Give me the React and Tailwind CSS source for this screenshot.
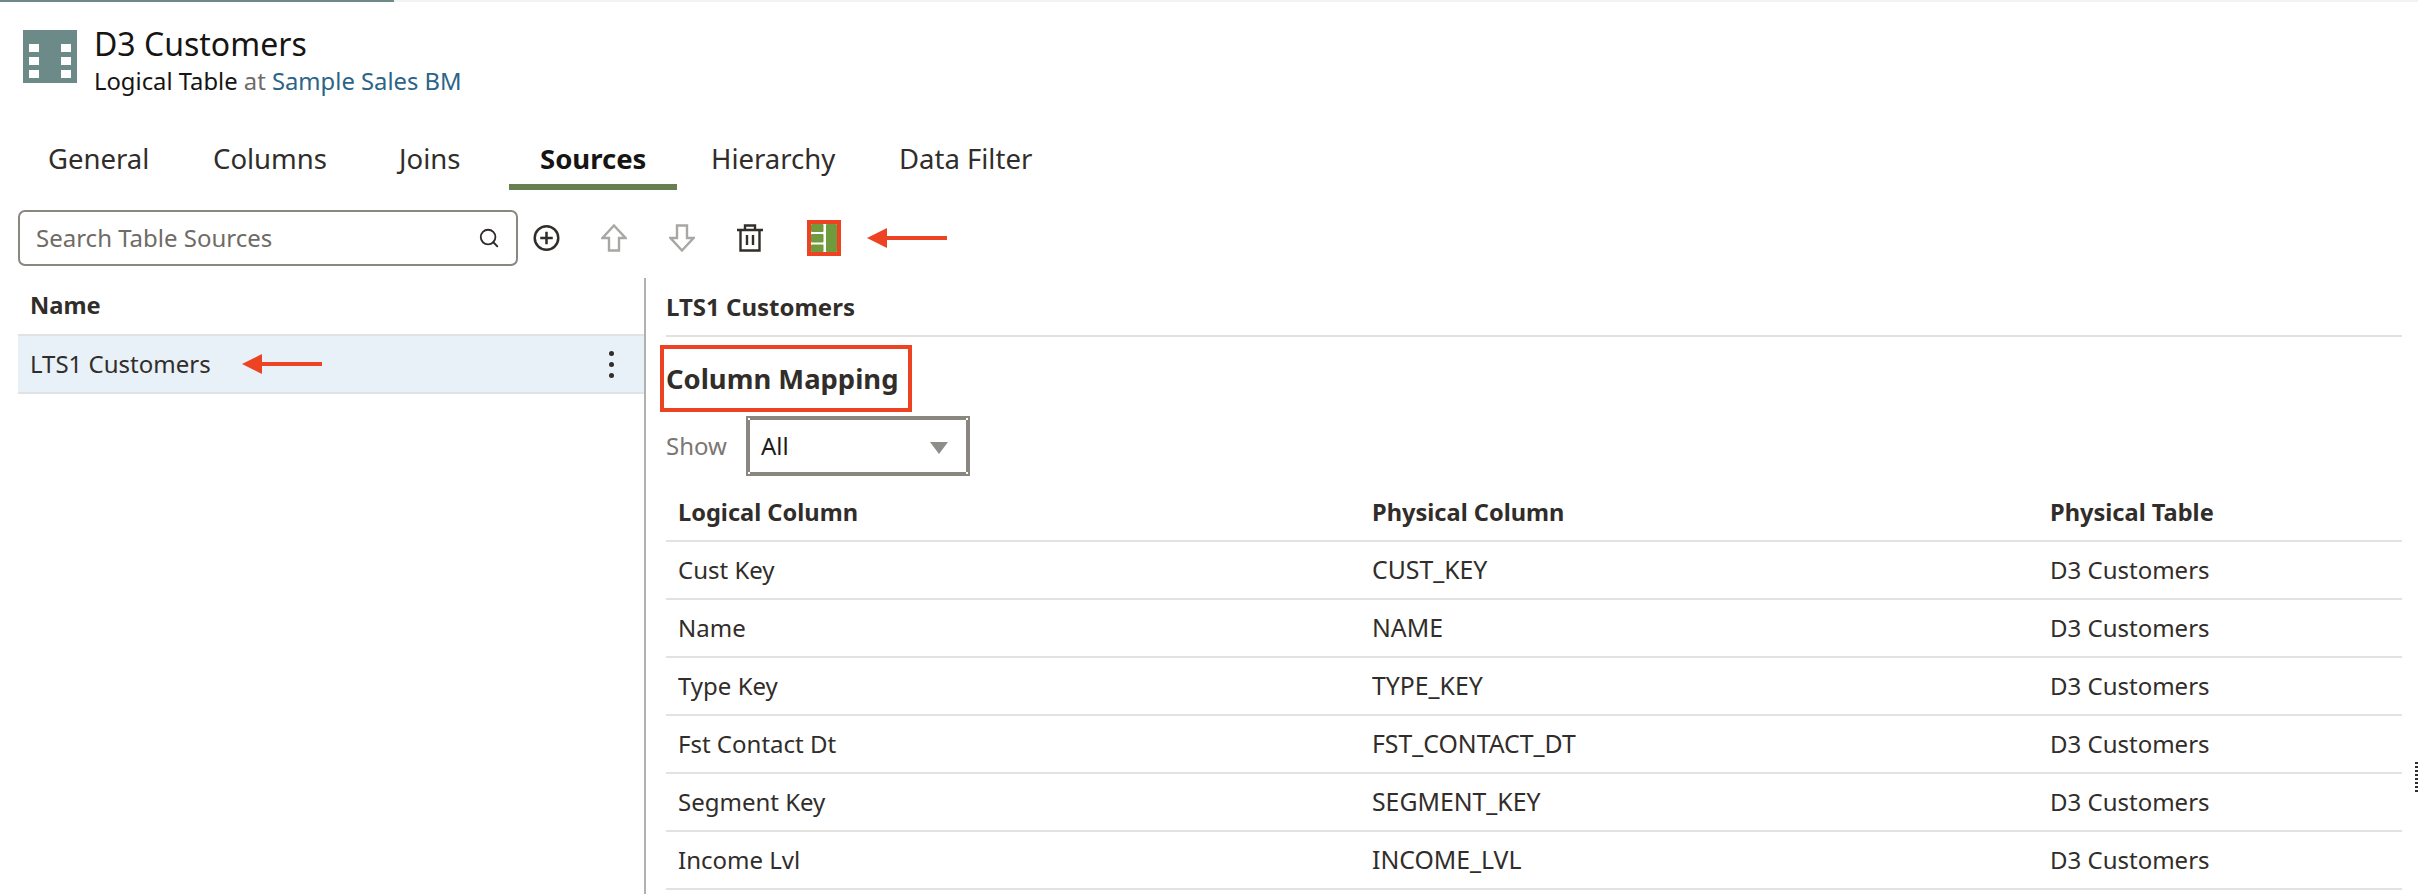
import { Search } from 'lucide-react';

const rows = [
    ['Cust Key', 'CUST_KEY'],
    ['Name', 'NAME'],
    ['Type Key', 'TYPE_KEY'],
    ['Fst Contact Dt', 'FST_CONTACT_DT'],
    ['Segment Key', 'SEGMENT_KEY'],
    ['Income Lvl', 'INCOME_LVL'],
];

const tabs = [
    { label: 'General', cls: 'w-[165px] pl-[31px]' },
    { label: 'Columns', cls: 'w-[186px] pl-[31px]' },
    { label: 'Joins', cls: 'w-[141px] pl-[31px]' },
    { label: 'Sources', cls: 'w-[168px] pl-[31px]', active: true },
    { label: 'Hierarchy', cls: 'w-[203px] pl-[34px]' },
    { label: 'Data Filter', cls: 'w-[160px] pl-[19px]' },
];

function RedArrow({ className }) {
    return (
        <svg className={className} width="80" height="20" viewBox="0 0 80 20">
            <path d="M0 10 L20 0 V8 H80 V12 H20 V20 Z" fill="#ee4323" />
        </svg>
    );
}

function TableIcon() {
    return (
        <svg width="54" height="53" viewBox="0 0 54 53">
            <rect width="54" height="53" fill="#6b8a88" />
            <g fill="#fff">
                <rect x="6" y="14" width="10" height="8" />
                <rect x="38" y="14" width="10" height="8" />
                <rect x="6" y="27" width="10" height="8" />
                <rect x="38" y="27" width="10" height="8" />
                <rect x="6" y="40" width="10" height="8" />
                <rect x="38" y="40" width="10" height="8" />
            </g>
        </svg>
    );
}

function Toolbar() {
    return (
        <div className="flex items-center h-[56px]">
            <div className="w-[500px] h-[56px] ml-[18px] border-2 border-[#8a8680] rounded-[7px] flex items-center justify-between pl-[16px] pr-[16px]">
                <span className="text-[24px] text-[#6f6b66]">Search Table Sources</span>
                <Search size={22} strokeWidth={2} className="text-[#2f2c2a]" />
            </div>
            <svg className="ml-[15px]" width="27" height="28" viewBox="0 0 28 28" fill="none" stroke="#312d2a" strokeWidth="2.6">
                <circle cx="14" cy="14" r="12.2" />
                <path d="M14 7.5V20.5M7.5 14H20.5" />
            </svg>
            <svg className="ml-[41px]" width="26" height="28" viewBox="0 0 26 28" fill="none" stroke="#a9a7a4" strokeWidth="2.4">
                <path d="M13 1.5 L24.5 14 H18 V26.5 H8 V14 H1.5 Z" />
            </svg>
            <svg className="ml-[42px]" width="26" height="28" viewBox="0 0 26 28" fill="none" stroke="#a9a7a4" strokeWidth="2.4">
                <path d="M13 26.5 L24.5 14 H18 V1.5 H8 V14 H1.5 Z" />
            </svg>
            <svg className="ml-[42px]" width="26" height="28" viewBox="0 0 26 28" fill="none" stroke="#312d2a" strokeWidth="2.4">
                <path d="M0 6H26M8 6V1.5H18V6M3.5 6V26.5H22.5V6M10 11V21M16 11V21" />
            </svg>
            <div className="ml-[44px] w-[34px] h-[36px] border-[4px] border-[#ee4323] flex">
                <svg width="26" height="28" viewBox="0 0 26 28">
                    <g fill="#6f9a3d">
                        <rect x="0" y="0" width="12.5" height="8" rx="1" />
                        <rect x="0" y="10" width="12.5" height="8.5" rx="1" />
                        <rect x="0" y="20.5" width="12.5" height="7.5" rx="1" />
                        <rect x="15" y="0" width="11" height="28" rx="1" />
                    </g>
                </svg>
            </div>
            <RedArrow className="ml-[26px]" />
        </div>
    );
}

function LeftPanel() {
    return (
        <div className="w-[646px] pl-[18px] border-r-2 border-[#b3b1ae] shrink-0">
            <div className="h-[56px] pl-[12px] flex items-center text-[23.7px] font-bold text-[#312d2a]">Name</div>
            <div className="h-[60px] bg-[#e8f1f8] border-y-2 border-[#e0e2e4] pl-[12px] pr-[30px] flex items-center justify-between">
                <div className="flex items-center">
                    <span className="text-[24px] text-[#312d2a]">LTS1 Customers</span>
                    <RedArrow className="ml-[31px]" />
                </div>
                <div className="flex flex-col gap-[6px]">
                    <span className="w-[5px] h-[5px] rounded-full bg-[#312d2a]" />
                    <span className="w-[5px] h-[5px] rounded-full bg-[#312d2a]" />
                    <span className="w-[5px] h-[5px] rounded-full bg-[#312d2a]" />
                </div>
            </div>
        </div>
    );
}

function RightPanel() {
    return (
        <div className="w-[1736px] ml-[20px] shrink-0">
            <div className="h-[59px] flex items-center text-[24px] font-bold text-[#312d2a] border-b-2 border-[#e4e2df]">LTS1 Customers</div>
            <div className="mt-[8px] ml-[-6px] w-[252px] h-[67px] border-[4px] border-[#ee4323] pl-[2px] flex items-center text-[27.4px] leading-none font-bold text-[#312d2a] whitespace-nowrap">
                Column Mapping
            </div>
            <div className="flex items-center mt-[4px]">
                <span className="w-[80px] text-[24px] text-[#7b7773]">Show</span>
                <div className="relative w-[224px] h-[60px] border-[4px] border-[#8a8680] flex items-center justify-between pl-[11px] pr-[18px]">
                    <span className="text-[24px] text-[#1f1c1a]">All</span>
                    <span className="w-0 h-0 mt-[4px] border-x-[9px] border-x-transparent border-t-[12px] border-t-[#8f8d8a]" />
                    <span className="absolute -left-[2px] -top-[2px] w-[2px] h-[2px] bg-white" />
                    <span className="absolute -right-[2px] -top-[2px] w-[2px] h-[2px] bg-white" />
                    <span className="absolute -left-[2px] -bottom-[2px] w-[2px] h-[2px] bg-white" />
                    <span className="absolute -right-[2px] -bottom-[2px] w-[2px] h-[2px] bg-white" />
                </div>
            </div>
            <div className="grid grid-cols-[694px_678px_1fr] h-[66px] pl-[12px] pt-[10px] items-center text-[23.6px] font-bold text-[#312d2a] border-b-2 border-[#e4e2df]">
                <span>Logical Column</span>
                <span>Physical Column</span>
                <span>Physical Table</span>
            </div>
            {rows.map((r) => (
                <div key={r[0]} className="grid grid-cols-[694px_678px_1fr] h-[58px] pl-[12px] items-center text-[24px] text-[#312d2a] border-b-2 border-[#e4e2df]">
                    <span>{r[0]}</span>
                    <span className="text-[24.8px]">{r[1]}</span>
                    <span>D3 Customers</span>
                </div>
            ))}
        </div>
    );
}

export default function App() {
    return (
        <div className="relative w-[2418px] h-[894px] overflow-hidden bg-white font-['Noto_Sans','Open_Sans',sans-serif]">
            {/* progress strip */}
            <div className="h-[2px] bg-[#f2f2f2]">
                <div className="h-full w-[394px] bg-[#6b8a88]" />
            </div>

            <div className="flex items-start pl-[23px] pt-[28px] h-[82px]">
                <TableIcon />
                <div className="ml-[17px] -mt-[5px]">
                    <div className="text-[32px] leading-[38px] text-[#161513]">D3 Customers</div>
                    <div className="text-[23.8px] leading-[36px] text-[#161513]">
                        Logical Table <span className="text-[#6f6b66]">at</span> <span className="text-[#2c6489]">Sample Sales BM</span>
                    </div>
                </div>
            </div>

            <div className="flex h-[60px] mt-[46px] pl-[17px]">
                {tabs.map((t) => (
                    <div key={t.label} className={`${t.cls} relative h-[60px] flex items-center pb-[2px] whitespace-nowrap text-[27.5px] ${t.active ? 'font-bold text-[#161513]' : 'text-[#312d2a]'}`}>
                        {t.label}
                        {t.active && <span className="absolute left-0 right-0 bottom-0 h-[6px] bg-[#66804f]" />}
                    </div>
                ))}
            </div>

            <div className="mt-[20px]">
                <Toolbar />
            </div>

            <div className="flex mt-[12px] h-[616px]">
                <LeftPanel />
                <RightPanel />
            </div>

            {/* resize grip at the window edge */}
            <div className="absolute right-0 top-[762px] w-[3px] h-[30px] bg-[repeating-linear-gradient(to_bottom,#312d2a_0_2px,transparent_2px_4px)]" />
        </div>
    );
}
